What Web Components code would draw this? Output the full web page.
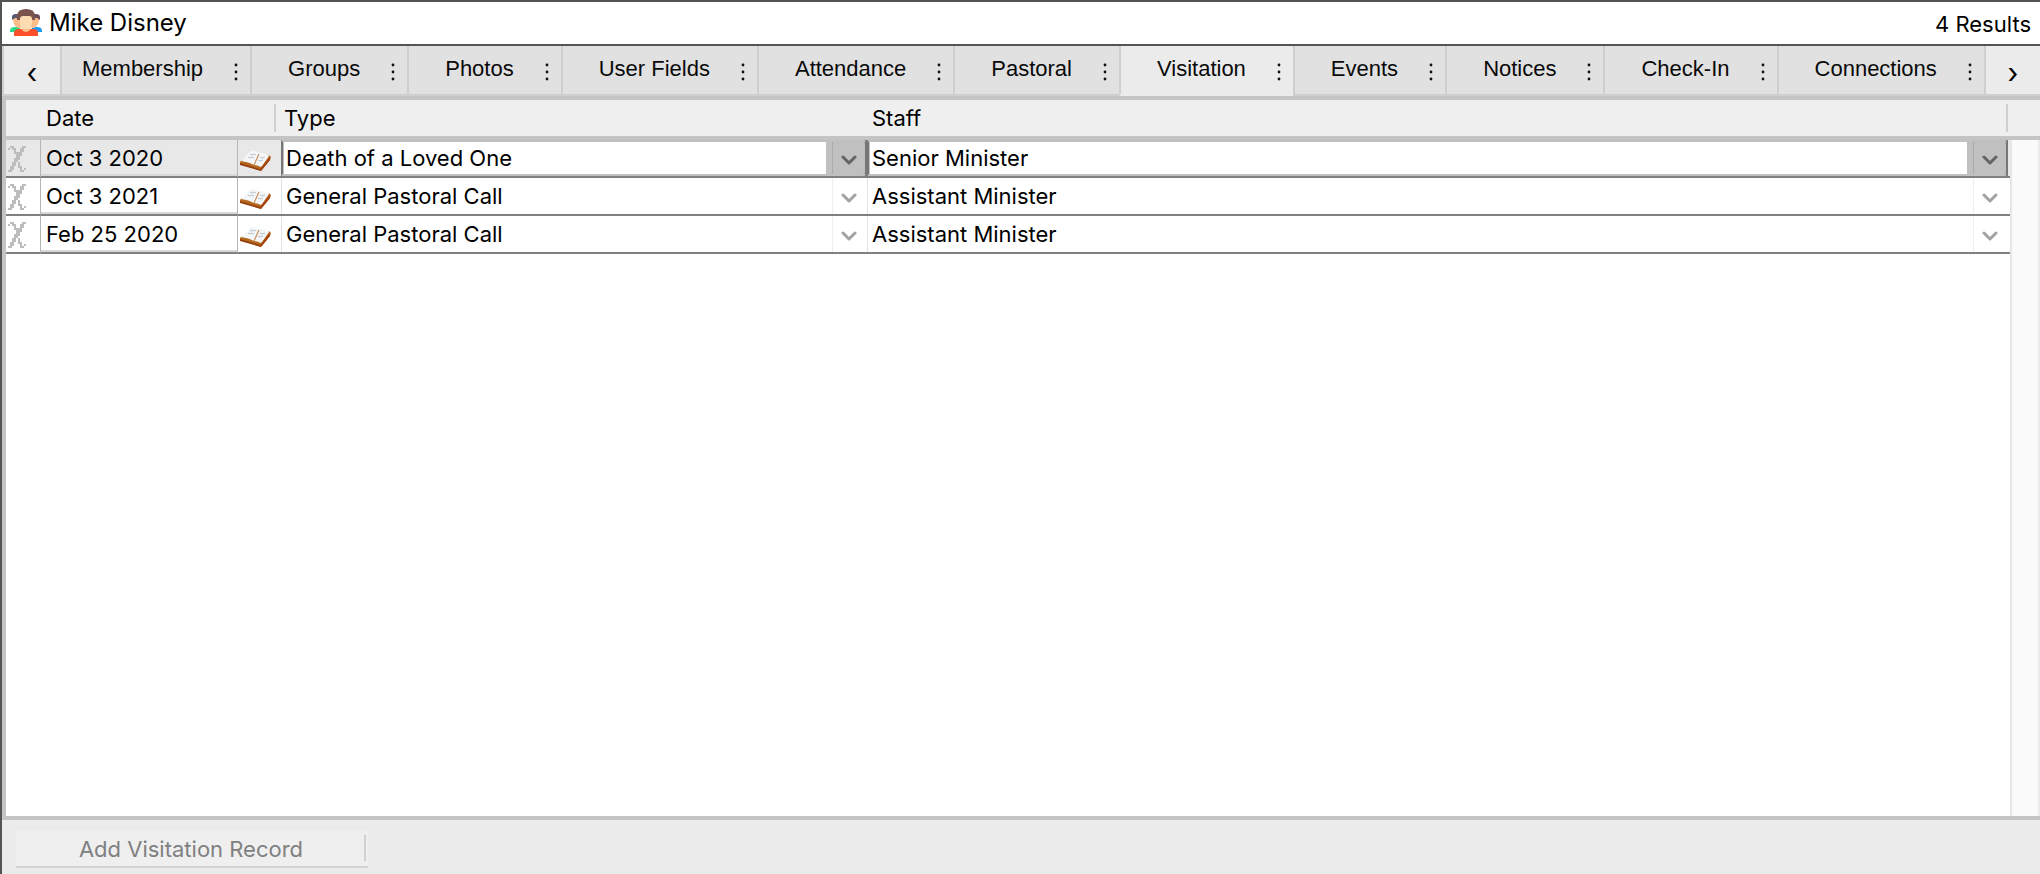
<!DOCTYPE html>
<html lang="en">
<head>
<meta charset="utf-8">
<title>Mike Disney</title>
<style>
  body { display: grid; min-height: 100vh; margin: 0; font-family: Inter, "Liberation Sans", sans-serif; font-size: 22px; color: #000; }
</style>
</head>
<body>
<member-window>
  <member-header slot="header" results="4 Results">Mike Disney</member-header>
  <tab-strip slot="tabs">
    <tab-item class="first">Membership</tab-item>
    <tab-item>Groups</tab-item>
    <tab-item>Photos</tab-item>
    <tab-item>User Fields</tab-item>
    <tab-item>Attendance</tab-item>
    <tab-item>Pastoral</tab-item>
    <tab-item selected>Visitation</tab-item>
    <tab-item>Events</tab-item>
    <tab-item>Notices</tab-item>
    <tab-item>Check-In</tab-item>
    <tab-item>Connections</tab-item>
  </tab-strip>
  <visit-grid></visit-grid>
  <record-button slot="footer">Add Visitation Record</record-button>
</member-window>

<script>
// Outer frame: header, tabs, grid, footer bar
class MemberWindow extends HTMLElement {
  constructor() {
    super();
    this.attachShadow({ mode: 'open' }).innerHTML = `
      <style>
        :host { display: flex; flex-direction: column; min-width: 0;
                border-top: 2px solid #555354; border-left: 2px solid #555354; background: #ebebeb; }
        main { flex: 1; display: flex; }
        footer { padding: 10px 14px 6px; }
      </style>
      <slot name="header"></slot>
      <slot name="tabs"></slot>
      <main><slot></slot></main>
      <footer><slot name="footer"></slot></footer>`;
  }
}
customElements.define('member-window', MemberWindow);

class MemberHeader extends HTMLElement {
  constructor() {
    super();
    this.attachShadow({ mode: 'open' }).innerHTML = `
      <style>
        :host { display: flex; align-items: center; height: 42px; padding: 0 9px 0 8px;
                background: #fff; border-bottom: 2px solid #555354; }
        h1 { flex: 1; margin: 0 0 0 7px; font-size: 24px; line-height: 42px; font-weight: 400; }
        svg { display: block; }
        #results { padding-top: 2px; }
      </style>
      <svg width="32" height="28" viewBox="0 0 32 28" aria-hidden="true">
        <path d="M0 22q0-4 5-4h5v5H0z" fill="#2bd98a"/>
        <path d="M32 22q0-4-5-4h-5v5h10z" fill="#1a9bf5"/>
        <path d="M3 8h8v11H8q-5-3-5-8z" fill="#fdbd8b"/>
        <path d="M29 8h-8v11h3q5-3 5-8z" fill="#fdbd8b"/>
        <path d="M2 11V8q0-3 4-3h4v4H5z" fill="#56566f"/>
        <path d="M30 11V8q0-3-4-3h-4v4h5z" fill="#6a4f5a"/>
        <path d="M4 27v-3q0-4 5-4h14q5 0 5 4v3z" fill="#fd4f2a"/>
        <path d="M12 17h8v4q-4 4-8 0z" fill="#fbc08c"/>
        <path d="M7 11V6q1-6 9-6t9 6v5z" fill="#7b534d"/>
        <path d="M10 10q0-3 3-3h6q3 0 3 3v4q0 6-6 6t-6-6z" fill="#fedcb2"/>
      </svg>
      <h1><slot></slot></h1>
      <span id="results"></span>`;
  }
  connectedCallback() {
    this.shadowRoot.getElementById('results').textContent = this.getAttribute('results');
  }
}
customElements.define('member-header', MemberHeader);

class TabStrip extends HTMLElement {
  constructor() {
    super();
    this.attachShadow({ mode: 'open' }).innerHTML = `
      <style>
        :host { display: flex; height: 50px; background: #ebebeb; border-left: 2px solid #cfcfcf; }
        button { box-sizing: border-box; border: 0; border-bottom: 2px solid #cfcfcf; padding: 6px 0 0;
                 background: #ebebeb; font: inherit; font-size: 28px; line-height: 42px; color: #000; }
        .prev { width: 56px; }
        .next { flex: 1; }
        div { display: flex; }
      </style>
      <button class="prev" aria-label="Previous tabs">‹</button>
      <div role="tablist"><slot></slot></div>
      <button class="next" aria-label="Next tabs">›</button>`;
  }
}
customElements.define('tab-strip', TabStrip);

class TabItem extends HTMLElement {
  constructor() {
    super();
    this.attachShadow({ mode: 'open' }).innerHTML = `
      <style>
        :host { display: flex; box-sizing: border-box; border-left: 2px solid #cfcfcf;
                border-bottom: 2px solid #cfcfcf; background: #e1e1e1; }
        :host(:last-child) { border-right: 2px solid #cfcfcf; }
        :host([selected]) { background: #ebebeb; border-bottom-color: #ebebeb; }
        button { border: 0; padding: 0; background: none; color: #0a0a0a; }
        .label { padding: 0 19px 3px 36px; font: 22px "Liberation Sans", Arial, sans-serif; }
        :host(.first) .label { padding-left: 20px; }
        .more { width: 28px; }
        svg { display: block; margin: 3px auto 0; }
      </style>
      <button class="label" role="tab"><slot></slot></button>
      <button class="more" aria-label="Tab menu">
        <svg width="4" height="18" viewBox="0 0 4 18"><g fill="#111">
          <circle cx="2" cy="2" r="1.4"/><circle cx="2" cy="9" r="1.4"/><circle cx="2" cy="16" r="1.4"/>
        </g></svg>
      </button>`;
  }
}
customElements.define('tab-item', TabItem);

// Drop-down cell
class PickCell extends HTMLElement {
  constructor() {
    super();
    this.attachShadow({ mode: 'open' }).innerHTML = `
      <style>
        :host { display: grid; height: 36px; }
        :host([active]) { background: #777; }
        select, svg { grid-area: 1 / 1; }
        select { appearance: none; box-sizing: border-box; width: 100%; height: 36px; margin: 0;
                 border: 0; border-left: 1px solid #e2e2e2; border-radius: 0; padding: 0 40px 0 4px;
                 background: linear-gradient(#eee, #eee) right 34px top / 1px 100% no-repeat #fff;
                 font: inherit; color: #000; }
        svg { justify-self: end; align-self: center; margin: 4px 10px 0 0; pointer-events: none; }
        path { fill: none; stroke: #a2a2a2; stroke-width: 3; stroke-linecap: round; stroke-linejoin: round; }
        :host([active]) select {
          border: 2px solid #c0c0c0; border-left-color: #777; border-right-color: #777;
          border-top-right-radius: 4px; border-bottom-right-radius: 4px;
          padding-left: 3px;
          background: linear-gradient(#aaa, #aaa) right 32px top / 1px 100% no-repeat,
                      linear-gradient(#c0c0c0, #c0c0c0) right / 39px 100% no-repeat,
                      linear-gradient(#c0c0c0, #c0c0c0) left / 1px 100% no-repeat #fff; }
        :host([active]) path { stroke: #636363; }
      </style>
      <select></select>
      <svg width="16" height="10" viewBox="0 0 16 10"><path d="M2 2l6 6 6-6"/></svg>`;
  }
  connectedCallback() {
    const select = this.shadowRoot.querySelector('select');
    select.setAttribute('aria-label', this.getAttribute('label'));
    select.add(new Option(this.getAttribute('value')));
  }
}
customElements.define('pick-cell', PickCell);

class VisitGrid extends HTMLElement {
  constructor() {
    super();
    const rows = [
      ['Oct 3 2020', 'Death of a Loved One', 'Senior Minister'],
      ['Oct 3 2021', 'General Pastoral Call', 'Assistant Minister'],
      ['Feb 25 2020', 'General Pastoral Call', 'Assistant Minister']
    ];
    const body = rows.map(([date, type, staff], i) => {
      const active = i === 0 ? 'active' : '';
      return `
        <tr class="${active}">
          <td><button aria-label="Delete record">${VisitGrid.deleteIcon}</button></td>
          <td class="date"><input type="text" aria-label="Date" value="${date}"></td>
          <td><button aria-label="Open notes">${VisitGrid.bookIcon}</button></td>
          <td><pick-cell label="Type" value="${type}" ${active}></pick-cell></td>
          <td><pick-cell label="Staff" value="${staff}" ${active}></pick-cell></td>
        </tr>`;
    }).join('');
    this.attachShadow({ mode: 'open' }).innerHTML = `
      <style>
        :host { flex: 1; display: grid; grid-template-columns: 1fr 30px; grid-template-rows: 44px 1fr;
                border-left: 4px solid #c4c4c4; border-bottom: 4px solid #c4c4c4; background: #fff; }
        .head { grid-area: 1 / 1 / 2 / 3; border-top: 4px solid #c4c4c4; border-bottom: 4px solid #c4c4c4;
                background: #efefef; }
        table { grid-area: 1 / 1 / 3 / 2; align-self: start; width: 100%; table-layout: fixed;
                border-collapse: separate; border-spacing: 0; }
        .del { width: 34px; }
        .day { width: 198px; }
        .book { width: 43px; }
        .type { width: 586px; }
        th { height: 36px; padding: 4px 0; font-weight: 400; text-align: left; line-height: 36px; }
        th.sep { background: linear-gradient(#cfcfcf, #cfcfcf) right 5px center / 2px 28px no-repeat; }
        th.end { background: linear-gradient(#cfcfcf, #cfcfcf) right 2px center / 2px 28px no-repeat; }
        .date-head { padding-left: 6px; }
        .type-head { padding-left: 3px; }
        .staff-head { padding-left: 5px; }
        td { height: 36px; padding: 0; border-bottom: 2px solid #808080; }
        td:last-child { padding-right: 2px; }
        td.date { border-left: 1px solid #b5b5b5; border-right: 1px solid #b5b5b5; }
        td button { display: block; width: 100%; height: 36px; padding: 2px 0 0 2px; border: 0; background: none; }
        td svg { display: block; }
        input { display: block; box-sizing: border-box; width: 100%; height: 36px; border: 0;
                border-bottom: 2px solid #d8d8d8; padding: 2px 0 0 5px; background: none; font: inherit; color: #000; }
        tr.active { background: #e8e8e8; }
        .track { grid-area: 2 / 2; border-left: 2px solid #e6e6e6; border-right: 2px solid #ebebeb; background: #fafafa; }
      </style>
      <div class="head"></div>
      <table>
        <colgroup><col class="del"><col class="day"><col class="book"><col class="type"><col></colgroup>
        <thead><tr>
          <th></th><th class="date-head">Date</th><th class="sep"></th>
          <th class="type-head">Type</th><th class="staff-head end">Staff</th>
        </tr></thead>
        <tbody>${body}</tbody>
      </table>
      <div class="track"></div>`;
  }

  static get deleteIcon() {
    return `<svg width="18" height="26" viewBox="0 0 9 13" shape-rendering="crispEdges">
      <path fill="#bdbdbd" d="M1 0h2v1H1zM7 0h2v1H7zM0 1h1v1H0zM2 1h2v1H2zM6 1h2v1H6zM3 2h1v1H3zM6 2h2v1H6zM3 3h4v1H3zM4 4h3v1H4zM4 5h2v1H4zM3 6h3v1H3zM3 7h2v1H3zM2 8h2v1H2zM5 8h1v1H5zM2 9h2v1H2zM5 9h1v1H5zM1 10h2v1H1zM5 10h2v1H5zM1 11h2v1H1zM6 11h1v1H6zM8 11h1v1H8zM0 12h2v1H0zM6 12h2v1H6z"/>
    </svg>`;
  }

  static get bookIcon() {
    return `<svg width="32" height="24" viewBox="0 -3 32 24">
      <path d="M0 12L2 10 22 16 29 5 31 7 30 10 21 21 0 14z" fill="#b5691f"/>
      <path d="M0 13L20 19 21 21 0 15z" fill="#95400f"/>
      <path d="M20 19L30 7 30 10 21 21z" fill="#a3420f"/>
      <path d="M11 1q4-1 7 2 5-1 11 3L21 17q-4-2-7-2-5-3-13-4z" fill="#f4f7f9"/>
      <path d="M14 15L19 4" stroke="#c98f5c" stroke-width="1.2"/>
      <path d="M10 4l2 1 2-1 2 1M8 7l2 1 2-1 2 1M20 7l2 1 3-1M18 10l2 1 3-1" fill="none" stroke="#b9c0c4" stroke-width="1"/>
    </svg>`;
  }
}
customElements.define('visit-grid', VisitGrid);

class RecordButton extends HTMLElement {
  constructor() {
    super();
    this.attachShadow({ mode: 'open' }).innerHTML = `
      <style>
        :host { display: block; width: 352px; }
        button { display: block; width: 100%; height: 38px; padding: 2px 2px 0 0; border: 0; border-bottom: 2px solid #d2d2d2;
                 background: linear-gradient(#d2d2d2, #d2d2d2) right 2px center / 2px 26px no-repeat #efefef;
                 font: inherit; color: #808080; }
      </style>
      <button><slot></slot></button>`;
  }
}
customElements.define('record-button', RecordButton);
</script>
</body>
</html>
